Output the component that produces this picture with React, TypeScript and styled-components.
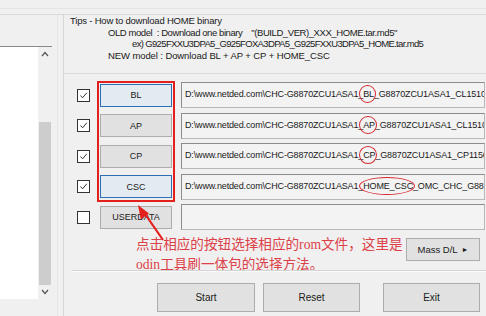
import styled, { createGlobalStyle } from "styled-components"

const GlobalStyle = createGlobalStyle`
  html, body {
    margin: 0;
    padding: 0;
    background: #f0f0f0;
  }
`

type FileRow = {
  name: string,
  checked: boolean,
  active?: boolean,
  before?: string,
  mark?: string,
  after?: string
}

const rows: FileRow[] = [
  { name: 'BL', checked: true, active: true, before: 'D:\\www.netded.com\\CHC-G8870ZCU1ASA1_', mark: 'BL', after: '_G8870ZCU1ASA1_CL15109738_QB7920380_REV00_user_low_ship.tar.md5' },
  { name: 'AP', checked: true, before: 'D:\\www.netded.com\\CHC-G8870ZCU1ASA1_', mark: 'AP', after: '_G8870ZCU1ASA1_CL15109738_QB7920380_REV00_user_low_ship.tar.md5' },
  { name: 'CP', checked: true, before: 'D:\\www.netded.com\\CHC-G8870ZCU1ASA1_', mark: 'CP', after: '_G8870ZCU1ASA1_CP11569822_CL15109738_QB7920380_REV00.tar.md5' },
  { name: 'CSC', checked: true, active: true, before: 'D:\\www.netded.com\\CHC-G8870ZCU1ASA1_', mark: 'HOME_CSC', after: '_OMC_CHC_G8870CHC1ASA1_CL15109738_QB7920380.tar.md5' },
  { name: 'USERDATA', checked: false }
]

const Window = styled.div`
  width: 486px;
  height: 316px;
  overflow: hidden;
  background: #f0f0f0;
  font-family: "Liberation Sans", Arial, sans-serif;
  color: #1a1a1a;
  display: flex;
  flex-direction: column;
`

const TopStrip = styled.div`
  height: 5px;
  margin-top: 8px;
  border-top: 1px solid #e4e4e4;
  border-bottom: 1px solid #dadada;
`

const Body = styled.div`
  flex: 1;
  display: flex;
  min-width: 0;
`

const LeftPane = styled.div`
  width: 57px;
  flex-shrink: 0;
  border-right: 1px solid #e6e6e6;
  padding-top: 31px;
`

const ListBox = styled.div`
  width: 52px;
  height: 252px;
  background: #fff;
  border-top: 1px solid #8a8a8a;
  display: flex;
  justify-content: flex-end;
`

const ScrollBar = styled.div`
  width: 14px;
  background: #f0f0f0;
  display: flex;
  flex-direction: column;
`

const ScrollArrow = styled.div`
  height: 14px;
  display: flex;
  align-items: center;
  justify-content: center;
`

const ScrollTrack = styled.div`
  flex: 1;
  display: flex;
  flex-direction: column;
  justify-content: flex-end;
  padding: 0 1px;
`

const Thumb = styled.div`
  height: 163px;
  background: #cdcdcd;
`

const RightPane = styled.div`
  position: relative;
  flex: 1;
  min-width: 0;
  margin-left: 5px;
  border-left: 1px solid #d6d6d6;
  display: flex;
  flex-direction: column;
`

const TipsBox = styled.div`
  height: 58px;
  border-bottom: 1px solid #dadada;
  font-size: 9.5px;
  line-height: 11.5px;
  white-space: pre;
`

const TipLine = styled.div<{ $indent: number, $squeeze?: number }>`
  padding-left: ${({ $indent }) => $indent}px;
  letter-spacing: ${({ $squeeze }) => $squeeze ?? -0.2}px;
`

const FileRows = styled.div`
  position: relative;
  padding-top: 6px;
`

const Row = styled.div`
  height: 30.5px;
  display: flex;
  align-items: center;
  padding-left: 13px;
`

const CheckBox = styled.div`
  width: 11px;
  height: 11px;
  border: 1px solid #333;
  background: #fff;
  display: flex;
  align-items: center;
  justify-content: center;
  flex-shrink: 0;
`

const FileButton = styled.div<{ $active?: boolean }>`
  width: 70px;
  height: 21px;
  margin-left: 10px;
  flex-shrink: 0;
  border: 1px solid ${({ $active }) => $active ? '#2a6fb8' : '#adadad'};
  background: ${({ $active }) => $active ? '#e3ebf2' : '#e1e1e1'};
  font-size: 9px;
  display: flex;
  align-items: center;
  justify-content: center;
`

const Field = styled.div`
  flex: 1;
  min-width: 0;
  height: 19px;
  margin-left: 9px;
  margin-right: 1px;
  padding: 5px 3px 0;
  border: 1px solid #8c8c8c;
  border-right-color: #b8b8b8;
  border-bottom-color: #b8b8b8;
  background: #f3f3f3;
  font-size: 9px;
  letter-spacing: -0.15px;
  line-height: 12px;
  white-space: nowrap;
  overflow: hidden;
`

const Mark = styled.span`
  position: relative;
  &::after {
    content: '';
    position: absolute;
    left: -4px;
    right: -2px;
    top: -4px;
    bottom: -4px;
    border: 1.5px solid #d3282e;
    border-radius: 50%;
  }
`

const RedFrame = styled.div`
  position: absolute;
  left: 33px;
  top: 7px;
  width: 74px;
  height: 117px;
  border: 2px solid #e3201c;
  pointer-events: none;
`

const ArrowSvg = styled.svg`
  position: absolute;
  left: 70px;
  top: 186px;
  overflow: visible;
  pointer-events: none;
`

const ActionRow = styled.div`
  height: 37.5px;
  display: flex;
  align-items: flex-start;
  padding-left: 72px;
`

const Note = styled.div`
  margin-top: 2.5px;
  flex-shrink: 0;
  font-family: "Liberation Serif", "Noto Sans CJK SC", serif;
  font-size: 13.6px;
  line-height: 20px;
  color: #dc3f48;
  white-space: nowrap;
`

const MassButton = styled.div`
  margin-top: 5.5px;
  margin-left: auto;
  margin-right: 6px;
  width: 72px;
  height: 21px;
  flex-shrink: 0;
  border: 1px solid #adadad;
  background: #e1e1e1;
  font-size: 9.5px;
  display: flex;
  align-items: center;
  justify-content: center;
  gap: 4px;
`

const Separator = styled.div`
  margin-left: 8px;
  border-top: 1px solid #d4d4d4;
  border-bottom: 1px solid #fafafa;
`

const BottomRow = styled.div`
  display: flex;
  gap: 8px;
  margin-top: 11px;
  padding-left: 93px;
`

const BigButton = styled.div<{ $width: number }>`
  width: ${({ $width }) => $width}px;
  height: 27px;
  border: 1px solid #adadad;
  background: #e1e1e1;
  font-size: 10px;
  display: flex;
  align-items: center;
  justify-content: center;
`

const ExitButton = styled(BigButton)`
  margin-left: 15px;
`

const Chevron = ({ up }: { up?: boolean }) => (
  <svg width="8" height="6" viewBox="0 0 8 6">
    <polyline
      points={up ? "1,5 4,1.5 7,5" : "1,1 4,4.5 7,1"}
      fill="none"
      stroke="#555"
      strokeWidth="1.2"
    />
  </svg>
)

const CheckMark = () => (
  <svg width="9" height="9" viewBox="0 0 9 9">
    <polyline points="1.5,4.5 3.6,6.8 7.8,1.8" fill="none" stroke="#333" strokeWidth="1" />
  </svg>
)

const App = () => {
  return (
    <Window>
      <GlobalStyle />
      <TopStrip />
      <Body>
        <LeftPane>
          <ListBox>
            <ScrollBar>
              <ScrollArrow><Chevron up /></ScrollArrow>
              <ScrollTrack><Thumb /></ScrollTrack>
              <ScrollArrow><Chevron /></ScrollArrow>
            </ScrollBar>
          </ListBox>
        </LeftPane>
        <RightPane>
          <TipsBox>
            <TipLine $indent={6}>Tips - How to download HOME binary</TipLine>
            <TipLine $indent={44} $squeeze={-0.42}>{'OLD model  : Download one binary    "(BUILD_VER)_XXX_HOME.tar.md5"'}</TipLine>
            <TipLine $indent={68} $squeeze={-0.65}>ex) G925FXXU3DPA5_G925FOXA3DPA5_G925FXXU3DPA5_HOME.tar.md5</TipLine>
            <TipLine $indent={44} $squeeze={-0.1}>NEW model : Download BL + AP + CP + HOME_CSC</TipLine>
          </TipsBox>
          <FileRows>
            {rows.map(row => (
              <Row key={row.name}>
                <CheckBox>{row.checked && <CheckMark />}</CheckBox>
                <FileButton $active={row.active}>{row.name}</FileButton>
                <Field>
                  {row.before}
                  {row.mark && <Mark>{row.mark}</Mark>}
                  {row.after}
                </Field>
              </Row>
            ))}
            <RedFrame />
          </FileRows>
          <ActionRow>
            <Note>
              <div>点击相应的按钮选择相应的rom文件，这里是</div>
              <div>odin工具刷一体包的选择方法。</div>
            </Note>
            <MassButton>Mass D/L <span style={{ fontSize: 7 }}>►</span></MassButton>
          </ActionRow>
          <Separator />
          <BottomRow>
            <BigButton $width={96}>Start</BigButton>
            <BigButton $width={95}>Reset</BigButton>
            <ExitButton $width={95}>Exit</ExitButton>
          </BottomRow>
          <ArrowSvg width="34" height="44" viewBox="0 0 34 44">
            <line x1="29" y1="39" x2="9" y2="10" stroke="#e3201c" strokeWidth="2.2" />
            <polygon points="4,4 15,12.5 6.8,18.4" fill="#e3201c" />
          </ArrowSvg>
        </RightPane>
      </Body>
    </Window>
  )
}

export default App
